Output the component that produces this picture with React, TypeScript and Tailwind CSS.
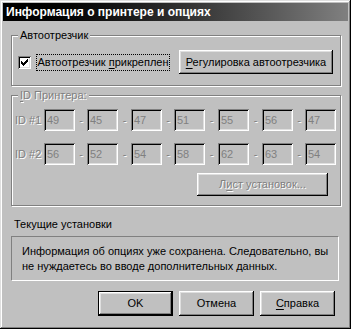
import { ReactNode } from 'react'

const raised =
  'shadow-[inset_-1px_-1px_#000,inset_1px_1px_#fff,inset_-2px_-2px_#808080,inset_2px_2px_#dfdfdf]'
const sunken =
  'shadow-[inset_1px_1px_#808080,inset_-1px_-1px_#fff,inset_2px_2px_#000,inset_-2px_-2px_#dfdfdf]'
const disabledText = 'text-[#808080] [text-shadow:1px_1px_0_#fff]'

// etched frame with a caption sitting on the top line
const GroupBox = ({ label, className, children }: { label: ReactNode, className: string, children: ReactNode }) => {
  return (
    <div className={`relative border border-[#808080] shadow-[1px_1px_0_#fff,inset_1px_1px_0_#fff] ${className}`}>
      <span className="absolute -top-[8px] left-[6px] bg-[#c0c0c0] px-[2px] leading-[14px]">{label}</span>
      {children}
    </div>
  )
}

const Button = ({ children, className = '', isDefault = false }: { children: ReactNode, className?: string, isDefault?: boolean }) => {
  return (
    <div className={`${isDefault ? 'border border-black' : ''} ${className}`}>
      <div className={`flex h-full w-full items-center justify-center bg-[#c0c0c0] ${raised}`}>{children}</div>
    </div>
  )
}

const idRows = [
  { label: '1', values: ['49', '45', '47', '51', '55', '56', '47'] },
  { label: '2', values: ['56', '52', '54', '58', '62', '63', '54'] },
]
const sepWidths = ['w-[12px]', 'w-[13px]', 'w-[12px]', 'w-[13px]', 'w-[13px]', 'w-[12px]']

export default function App() {
  return (
    <div
      className={`flex h-[329px] w-[351px] flex-col bg-[#c0c0c0] p-[3px] text-[11px] text-black shadow-[inset_-1px_-1px_#000,inset_1px_1px_#dfdfdf,inset_-2px_-2px_#808080,inset_2px_2px_#fff]`}
      style={{ fontFamily: '"Liberation Sans", Arial, sans-serif' }}
    >
      <div className="flex h-[18px] items-center bg-gradient-to-r from-black to-[#808080] pl-[3px] text-[12px] font-bold text-white">
        Информация о принтере и опциях
      </div>

      <div className="flex flex-col px-[8px]">
        {/* Автоотрезчик */}
        <GroupBox label="Автоотрезчик" className="mt-[14px] h-[51px] w-[330px]">
          <div className="flex items-center pl-[6px] pt-[14px]">
            <div className="flex h-[13px] w-[13px] items-center justify-center bg-white shadow-[inset_1px_1px_#808080,inset_-1px_-1px_#fff,inset_2px_2px_#000,inset_-2px_-2px_#dfdfdf]">
              <svg width="7" height="7" viewBox="0 0 7 7" shapeRendering="crispEdges">
                <path d="M0 2h1v3H0zM1 3h1v3H1zM2 4h1v3H2zM3 3h1v3H3zM4 2h1v3H4zM5 1h1v3H5zM6 0h1v3H6z" fill="#000" />
              </svg>
            </div>
            <div className="ml-[5px] flex h-[17px] w-[134px] items-center justify-center outline-1 outline-dotted outline-black -outline-offset-1">
              Автоотрезчик <span className="ml-[3px] underline underline-offset-2">п</span>рикреплен
            </div>
            <Button className="ml-[9px] h-[24px] w-[154px]">
              <span><span className="underline underline-offset-2">Р</span>егулировка автоотрезчика</span>
            </Button>
          </div>
        </GroupBox>

        {/* ID Принтера */}
        <GroupBox
          label={<span className={disabledText}><span className="underline underline-offset-2">I</span>D Принтера:</span>}
          className="mt-[9px] h-[111px] w-[330px]"
        >
          <div className="flex flex-col gap-[12px] pl-[3px] pt-[13px]">
            {idRows.map((row) => (
              <div key={row.label} className="flex h-[22px] items-center">
                <span className={`w-[29px] ${disabledText}`}>ID #{row.label}</span>
                {row.values.map((v, i) => (
                  <div key={i} className="flex items-center">
                    <div className={`flex h-[22px] w-[31px] items-center pl-[3px] text-[#808080] ${sunken}`}>{v}</div>
                    {i < sepWidths.length && (
                      <span className={`text-center ${sepWidths[i]} ${disabledText}`}>-</span>
                    )}
                  </div>
                ))}
              </div>
            ))}
          </div>
          <div className="flex justify-end pr-[12px] pt-[8px]">
            <Button className="h-[23px] w-[131px]">
              <span className={disabledText}>Л<span className="underline underline-offset-2">и</span>ст установок...</span>
            </Button>
          </div>
        </GroupBox>

        <div className="ml-[3px] mt-[11px] leading-[14px]">Текущие установки</div>

        <div className="mt-[5px] h-[45px] w-[328px] border-t border-l border-b border-r border-t-[#808080] border-l-[#808080] border-b-white border-r-white pl-[10px] pt-[7px] leading-[15px]">
          Информация об опциях уже сохранена. Следовательно, вы<br />
          не нуждаетесь во вводе дополнительных данных.
        </div>

        <div className="mt-[10px] flex justify-end gap-[6px] pr-[5px]">
          <Button isDefault className="h-[25px] w-[75px]">OK</Button>
          <Button className="h-[25px] w-[75px]">Отмена</Button>
          <Button className="h-[25px] w-[75px]">
            <span><span className="underline underline-offset-2">С</span>правка</span>
          </Button>
        </div>
      </div>
    </div>
  )
}
